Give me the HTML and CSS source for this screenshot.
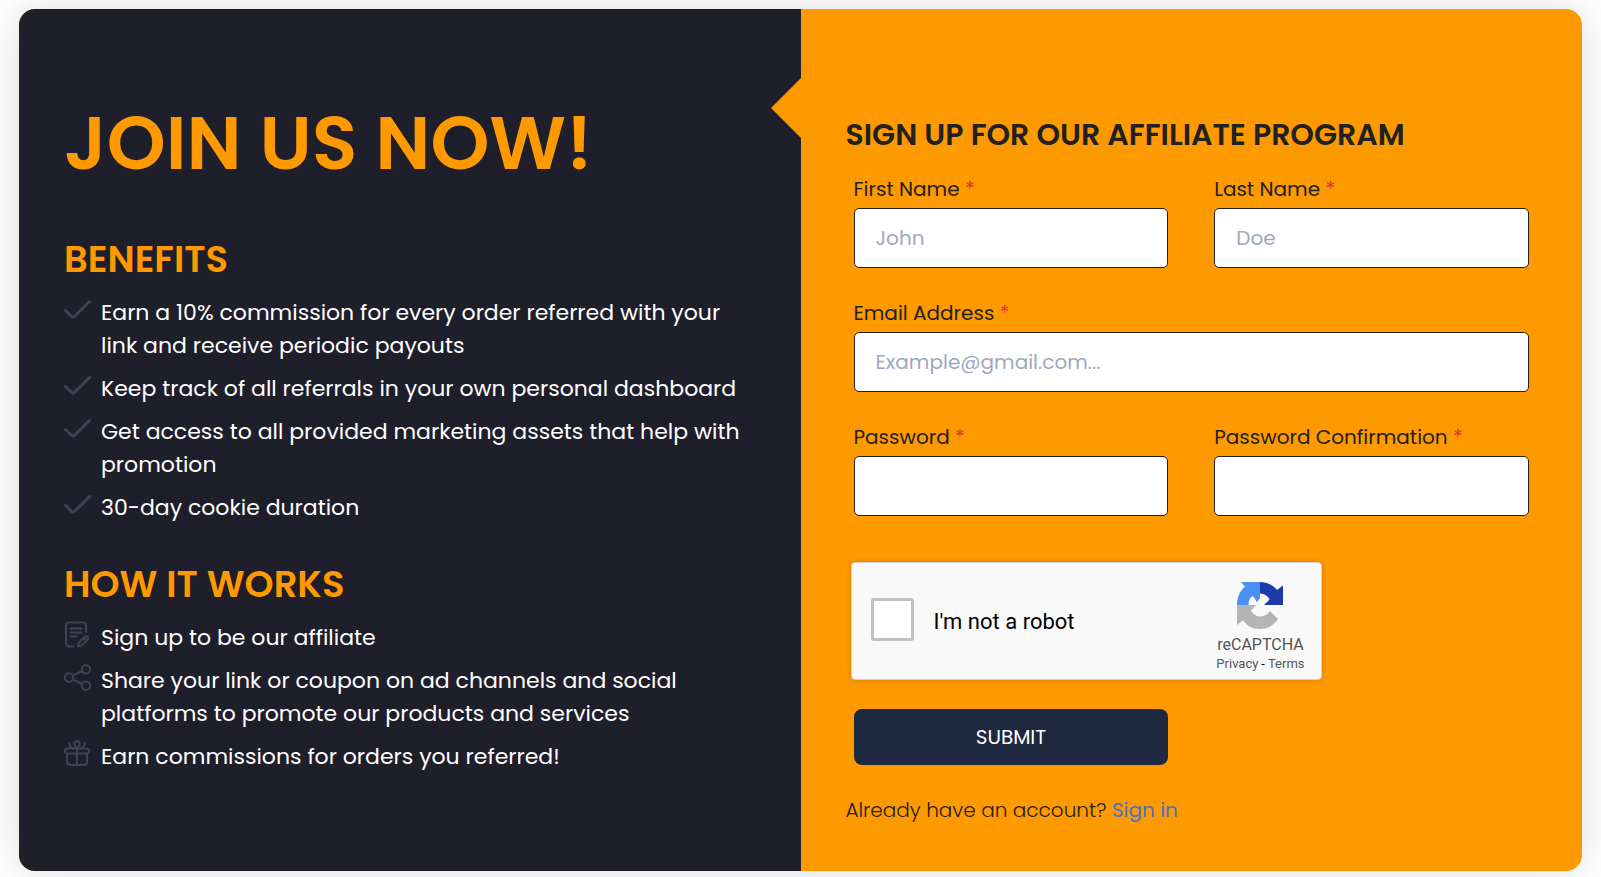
FILE: index.html
```html
<!DOCTYPE html>
<html lang="en">
<head>
<meta charset="utf-8">
<meta name="viewport" content="width=device-width, initial-scale=1">
<title>Affiliate Program</title>
<link rel="stylesheet" href="styles.css">
</head>
<body>
<svg class="sprite" aria-hidden="true">
  <symbol id="check" viewBox="0 0 27 27"><path d="M1.5 14.500 7.600 20.500Q9 21.800 10.400 20.500L25.500 5.500"/></symbol>
  <symbol id="form" viewBox="0 0 27 27"><path d="M9.5 25.500H5.500Q2 25.500 2 22V5Q2 1.500 5.500 1.500H18.500Q22 1.500 22 5V11M6.500 7.500H17.500M6.500 11.500H17.500M6.500 15.500H12.500M14 25.500 14.800 21.500 21.200 15.600Q22.400 14.700 23.700 15.900 25 17.200 24 18.400L17.800 24.400ZM19.800 17 22.600 19.700"/></symbol>
  <symbol id="share" viewBox="0 0 27 27"><circle cx="5" cy="13.500" r="4.200"/><circle cx="22" cy="5.200" r="4.200"/><circle cx="22" cy="21.800" r="4.200"/><path d="M8.800 11.700 18.200 7M8.800 15.300 18.200 20"/></symbol>
  <symbol id="gift" viewBox="0 0 27 27"><rect x="1" y="8.500" width="24" height="5" rx="2.500"/><path d="M3 13.500V21.500Q3 25 6.500 25H19.500Q23 25 23 21.500V13.500M13 8.500V25M13 8.500Q10 5.500 10.300 3.500 10.800 1 13 1T15.700 3.500Q16 5.500 13 8.500ZM8.800 8.300Q5.200 6.500 5.200 3M17.200 8.300Q20.800 6.500 20.800 3"/></symbol>
</svg>
<main class="card">
  <section class="intro">
    <h1 class="title">JOIN US NOW!</h1>
    <h2 class="subtitle">BENEFITS</h2>
    <ul class="list">
      <li class="item"><svg class="icon icon-check"><use href="#check"/></svg><span>Earn a 10% commission for every order referred with your link and receive periodic payouts</span></li>
      <li class="item"><svg class="icon icon-check"><use href="#check"/></svg><span>Keep track of all referrals in your own personal dashboard</span></li>
      <li class="item"><svg class="icon icon-check"><use href="#check"/></svg><span>Get access to all provided marketing assets that help with promotion</span></li>
      <li class="item"><svg class="icon icon-check"><use href="#check"/></svg><span>30-day cookie duration</span></li>
    </ul>
    <h2 class="subtitle">HOW IT WORKS</h2>
    <ul class="list">
      <li class="item"><svg class="icon"><use href="#form"/></svg><span>Sign up to be our affiliate</span></li>
      <li class="item"><svg class="icon"><use href="#share"/></svg><span>Share your link or coupon on ad channels and social platforms to promote our products and services</span></li>
      <li class="item"><svg class="icon"><use href="#gift"/></svg><span>Earn commissions for orders you referred!</span></li>
    </ul>
  </section>
  <section class="signup">
    <h2 class="form-title">SIGN UP FOR OUR AFFILIATE PROGRAM</h2>
    <form class="form">
      <div class="field"><label for="first">First Name <span class="req">*</span></label><input class="input" id="first" type="text" placeholder="John"></div>
      <div class="field"><label for="last">Last Name <span class="req">*</span></label><input class="input" id="last" type="text" placeholder="Doe"></div>
      <div class="field wide"><label for="email">Email Address <span class="req">*</span></label><input class="input" id="email" type="email" placeholder="Example@gmail.com..."></div>
      <div class="field"><label for="pass">Password <span class="req">*</span></label><input class="input" id="pass" type="password"></div>
      <div class="field"><label for="confirm">Password Confirmation <span class="req">*</span></label><input class="input" id="confirm" type="password"></div>
      <div class="captcha">
        <input class="robot" id="robot" type="checkbox"><label class="robot-label" for="robot">I'm not a robot</label>
        <div class="brand">
          <svg class="brand-logo" viewBox="0 0 46 47" aria-hidden="true">
            <path fill="#4a90f5" d="M23 0H4L8 4.500C3 9 0 15 0 23H11.500Q11.500 16 16 14L20 20 23 16Z"/>
            <path fill="#1c3aa9" d="M23 0C30 0 36 3 40 8L46 3.500V23H27L32.500 17.500Q30 12 23 11.500Z"/>
            <path fill="#b5b5b5" d="M0 23H19L14 28.500Q18 35 24 34.500 29 34 33 29L41 37C36 44 30 47 23 47 15 47 10 43.500 6 38.500L0 43Z"/>
          </svg>
          <span class="brand-name">reCAPTCHA</span>
          <span class="brand-links"><a href="#privacy">Privacy</a><span class="dash">-</span><a href="#terms">Terms</a></span>
        </div>
      </div>
      <button class="submit" type="submit">SUBMIT</button>
    </form>
    <p class="account">Already have an account? <a class="signin" href="#signin">Sign in</a></p>
  </section>
</main>
</body>
</html>
```
FILE: styles.css
```css
* { box-sizing: border-box; }
body {
  margin: 0;
  padding: 9px 19px 7px;
  background: #fff;
  font-family: Poppins, Inter, sans-serif;
  color: #212121;
}
.sprite { display: none; }
.card {
  display: grid;
  grid-template-columns: 1fr 1fr;
  border-radius: 16px;
  background: #ff9900;
  box-shadow: 0 0 40px rgba(0, 0, 0, 0.14);
}
.intro {
  padding: 88px 46px 40px 45px;
  border-radius: 16px 0 0 16px;
  background: #1f1e2b;
  color: #fff;
}
.title {
  margin: 0;
  font-size: 75px;
  line-height: 92px;
  font-weight: 600;
  color: #ff9900;
}
.subtitle {
  margin: 45px 0 12px;
  font-size: 37px;
  line-height: 50px;
  font-weight: 600;
  color: #ff9900;
}
.list + .subtitle { margin: 35px 0 12px; }
.list {
  display: flex;
  flex-direction: column;
  gap: 10px;
  margin: 0;
  padding: 0;
  list-style: none;
}
.item {
  display: flex;
  gap: 10px;
  font-size: 22px;
  line-height: 33px;
}
.icon {
  flex: none;
  width: 27px;
  height: 27px;
  fill: none;
  stroke: #404255;
  stroke-width: 2;
  stroke-linecap: round;
  stroke-linejoin: round;
}
.icon-check { stroke-width: 3; }
.signup {
  position: relative;
  padding: 105px 45px;
  padding-bottom: 46px;
}
.signup::before {
  content: "";
  position: absolute;
  top: 69px;
  left: -30px;
  border: 30px solid transparent;
  border-left-width: 0;
  border-right-color: #ff9900;
}
.form-title {
  margin: 0;
  font-size: 30px;
  line-height: 42px;
  font-weight: 600;
}
.form {
  display: grid;
  grid-template-columns: 1fr 1fr;
  gap: 32px 46px;
  padding: 20px 8px 0;
}
.field {
  display: flex;
  flex-direction: column;
  gap: 6px;
  font-size: 20px;
  line-height: 26px;
}
.wide { grid-column: 1 / -1; }
.req { color: #dc3545; }
.input {
  width: 100%;
  height: 60px;
  padding: 0 21px;
  border: 1px solid #212121;
  border-radius: 5px;
  background: #fff;
  font: inherit;
  color: #212121;
}
.input::placeholder { color: #a0a8bc; opacity: 1; }
.captcha {
  grid-column: 1 / -1;
  justify-self: start;
  display: flex;
  align-items: center;
  width: 471px;
  max-width: 100%;
  height: 118px;
  margin: 14px 0 -3px -3px;
  padding: 0 16px 0 19px;
  border: 1px solid #d3d3d3;
  border-radius: 4px;
  background: #f9f9f9;
  box-shadow: 0 0 5px rgba(0, 0, 0, 0.2);
  font-family: Roboto, sans-serif;
}
.robot {
  appearance: none;
  width: 43px;
  height: 43px;
  margin: 0 20px 4px 0;
  border: 3px solid #c1c1c1;
  border-radius: 3px;
  background: #fff;
}
.robot-label { font-size: 22px; color: #000; }
.brand {
  display: flex;
  flex-direction: column;
  align-items: center;
  margin-left: auto;
  padding-top: 12px;
  color: #555;
}
.brand-logo { width: 46px; height: 47px; }
.brand-name { margin-top: 5px; font-size: 16px; line-height: 21px; }
.brand-links { font-size: 13px; line-height: 18px; }
.brand-links a { color: inherit; text-decoration: none; }
.dash { padding: 0 3px; color: #000; }
.submit {
  height: 56px;
  border: 0;
  border-radius: 8px;
  background: #1e293f;
  font: inherit;
  font-size: 20px;
  color: #fff;
}
.account {
  margin: 30px 0 0;
  font-size: 20px;
  line-height: 30px;
  font-weight: 300;
}
.signin { color: #4a70c8; font-weight: 400; text-decoration: none; }
```
